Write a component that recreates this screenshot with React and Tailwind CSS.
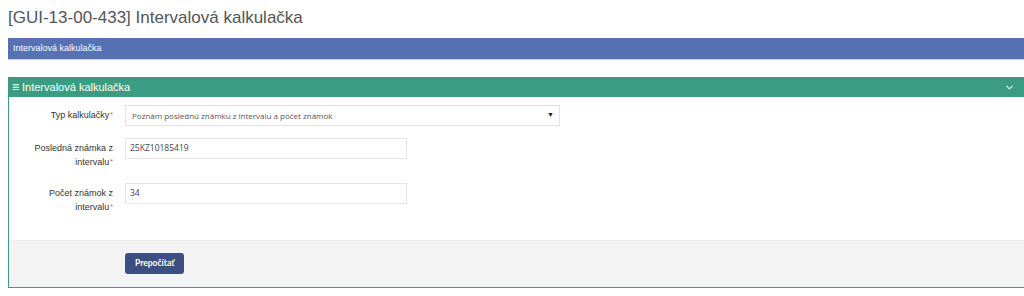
import { ChevronDown } from 'lucide-react';

function Field({ label1, label2, className = '', children }) {
  return (
    <div className={`flex items-start ${className}`}>
      <div className="w-[104px] shrink-0 text-right text-[9px] leading-[14px] text-[#333] pt-[3px] font-['Liberation_Sans',Arial,sans-serif]">
        {label1}
        {label2 && <br />}
        {label2}
        <span className="text-[#e05050] text-[7px] align-top ml-[1px]">*</span>
      </div>
      <div className="ml-[12px]">{children}</div>
    </div>
  );
}

export default function App() {
  return (
    <div className="w-[1024px] h-[296px] overflow-hidden bg-white font-['Liberation_Sans',Arial,sans-serif]">
      <h1 className="pl-[8px] pt-[6px] text-[17px] leading-[23px] text-[#555] font-normal">
        [GUI-13-00-433] Intervalová kalkulačka
      </h1>

      <div className="ml-[8px] mt-[9px] h-[22px] w-[1020px] bg-[#5672b3] border-b border-[#c4cfe6] flex items-center pl-[5px] text-[9px] text-white">
        Intervalová kalkulačka
      </div>

      <div className="ml-[8px] mt-[17px] w-[1030px] border border-[#3b9c84]">
        <div className="h-[20px] -mt-px bg-[#3b9c84] flex items-center pl-[3px] pr-[20px] text-white text-[11px]">
          <span className="text-[12px] mr-[3px] leading-none">≡</span>
          <span>Intervalová kalkulačka</span>
          <ChevronDown className="ml-auto mr-[2px] w-[11px] h-[11px] text-[#dff3ee]" strokeWidth={2.5} />
        </div>

        <div className="pt-[8px] pb-[26px] flex flex-col gap-[12px] font-['Open_Sans',sans-serif]">
          <Field label1="Typ kalkulačky">
            <div className="w-[435px] h-[21px] border border-[#f3dcdc] bg-white flex items-center pl-[6px] pr-[5px] text-[8px] text-[#555]">
              <span>Poznám poslednú známku z intervalu a počet známok</span>
              <span className="ml-auto text-[7px] text-[#222]">▼</span>
            </div>
          </Field>
          <Field label1="Posledná známka z" label2="intervalu">
            <div className="w-[282px] h-[21px] border border-[#e6e6e6] bg-white flex items-center pl-[4px] text-[8.5px] text-[#444]">
              25KZ10185419
            </div>
          </Field>
          <Field label1="Počet známok z" label2="intervalu" className="mt-[2px]">
            <div className="w-[282px] h-[21px] border border-[#e6e6e6] bg-white flex items-center pl-[4px] text-[8.5px] text-[#444]">
              34
            </div>
          </Field>
        </div>

        <div className="h-[47px] bg-[#f3f3f3] border-t border-[#ececec] flex items-start pl-[116px] pt-[12px]">
          <button className="h-[21px] px-[10px] rounded-[3px] bg-[#3d4f80] text-white text-[8.5px] font-['Lato',sans-serif] font-bold">
            Prepočítať
          </button>
        </div>
      </div>
    </div>
  );
}
